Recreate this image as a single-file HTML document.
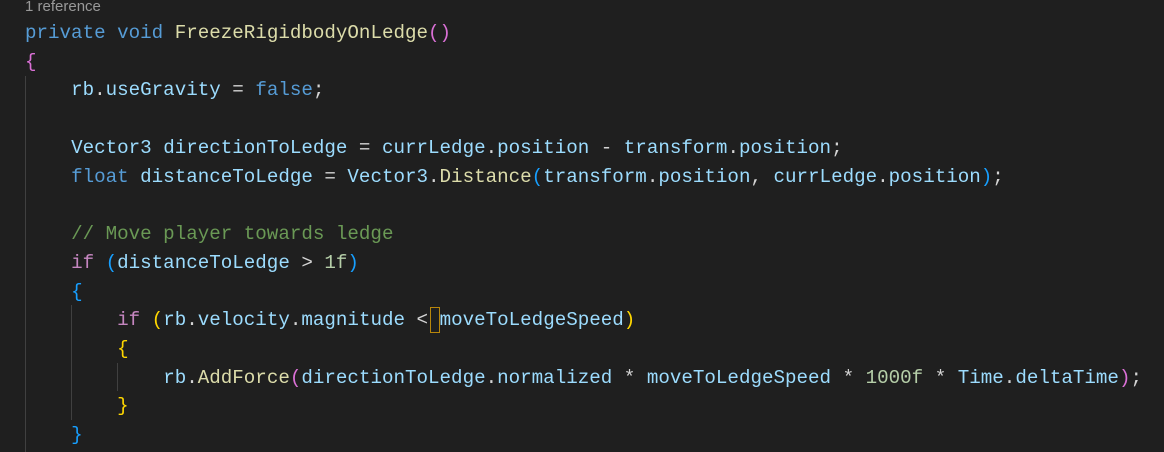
<!DOCTYPE html>
<html><head><meta charset="utf-8"><style>
html,body{margin:0;padding:0;background:#1f1f1f;width:1164px;height:452px;overflow:hidden}
.l{position:absolute;left:25px;height:28.72px;line-height:28.72px;font-family:"Liberation Mono",monospace;font-size:19.2px;white-space:pre;color:#d4d4d4}
.ref{position:absolute;left:25px;top:-3px;font-family:"Liberation Sans",sans-serif;font-size:15px;color:#999;line-height:20px}
.k{color:#569cd6}.f{color:#dcdcaa}.v{color:#9cdcfe}.c{color:#c586c0}.cm{color:#6a9955}.n{color:#b5cea8}
.p1{color:#da70d6}.p2{color:#179fff}.p3{color:#ffd700}
.g{position:absolute;width:1px;background:#404040}
.cur{position:absolute;border:1px solid #b8860b;width:8px;height:24px}
</style></head><body>
<div class="ref">1 reference</div>
<div class="g" style="left:25px;top:76px;height:376px"></div>
<div class="g" style="left:71px;top:305px;height:115px"></div>
<div class="g" style="left:117px;top:363px;height:28px"></div>
<div class="l" style="top:19px"><span class="k">private</span> <span class="k">void</span> <span class="f">FreezeRigidbodyOnLedge</span><span class="p1">()</span></div>
<div class="l" style="top:47.7px"><span class="p1">{</span></div>
<div class="l" style="top:76.4px">    <span class="v">rb</span>.<span class="v">useGravity</span> = <span class="k">false</span>;</div>
<div class="l" style="top:133.9px">    <span class="v">Vector3</span> <span class="v">directionToLedge</span> = <span class="v">currLedge</span>.<span class="v">position</span> - <span class="v">transform</span>.<span class="v">position</span>;</div>
<div class="l" style="top:162.6px">    <span class="k">float</span> <span class="v">distanceToLedge</span> = <span class="v">Vector3</span>.<span class="f">Distance</span><span class="p2">(</span><span class="v">transform</span>.<span class="v">position</span>, <span class="v">currLedge</span>.<span class="v">position</span><span class="p2">)</span>;</div>
<div class="l" style="top:220px">    <span class="cm">// Move player towards ledge</span></div>
<div class="l" style="top:248.8px">    <span class="c">if</span> <span class="p2">(</span><span class="v">distanceToLedge</span> &gt; <span class="n">1f</span><span class="p2">)</span></div>
<div class="l" style="top:277.5px">    <span class="p2">{</span></div>
<div class="l" style="top:306.2px">        <span class="c">if</span> <span class="p3">(</span><span class="v">rb</span>.<span class="v">velocity</span>.<span class="v">magnitude</span> &lt; <span class="v">moveToLedgeSpeed</span><span class="p3">)</span></div>
<div class="cur" style="left:430px;top:307px"></div>
<div class="l" style="top:334.9px">        <span class="p3">{</span></div>
<div class="l" style="top:363.6px">            <span class="v">rb</span>.<span class="f">AddForce</span><span class="p1">(</span><span class="v">directionToLedge</span>.<span class="v">normalized</span> * <span class="v">moveToLedgeSpeed</span> * <span class="n">1000f</span> * <span class="v">Time</span>.<span class="v">deltaTime</span><span class="p1">)</span>;</div>
<div class="l" style="top:392.4px">        <span class="p3">}</span></div>
<div class="l" style="top:421.1px">    <span class="p2">}</span></div>
</body></html>
